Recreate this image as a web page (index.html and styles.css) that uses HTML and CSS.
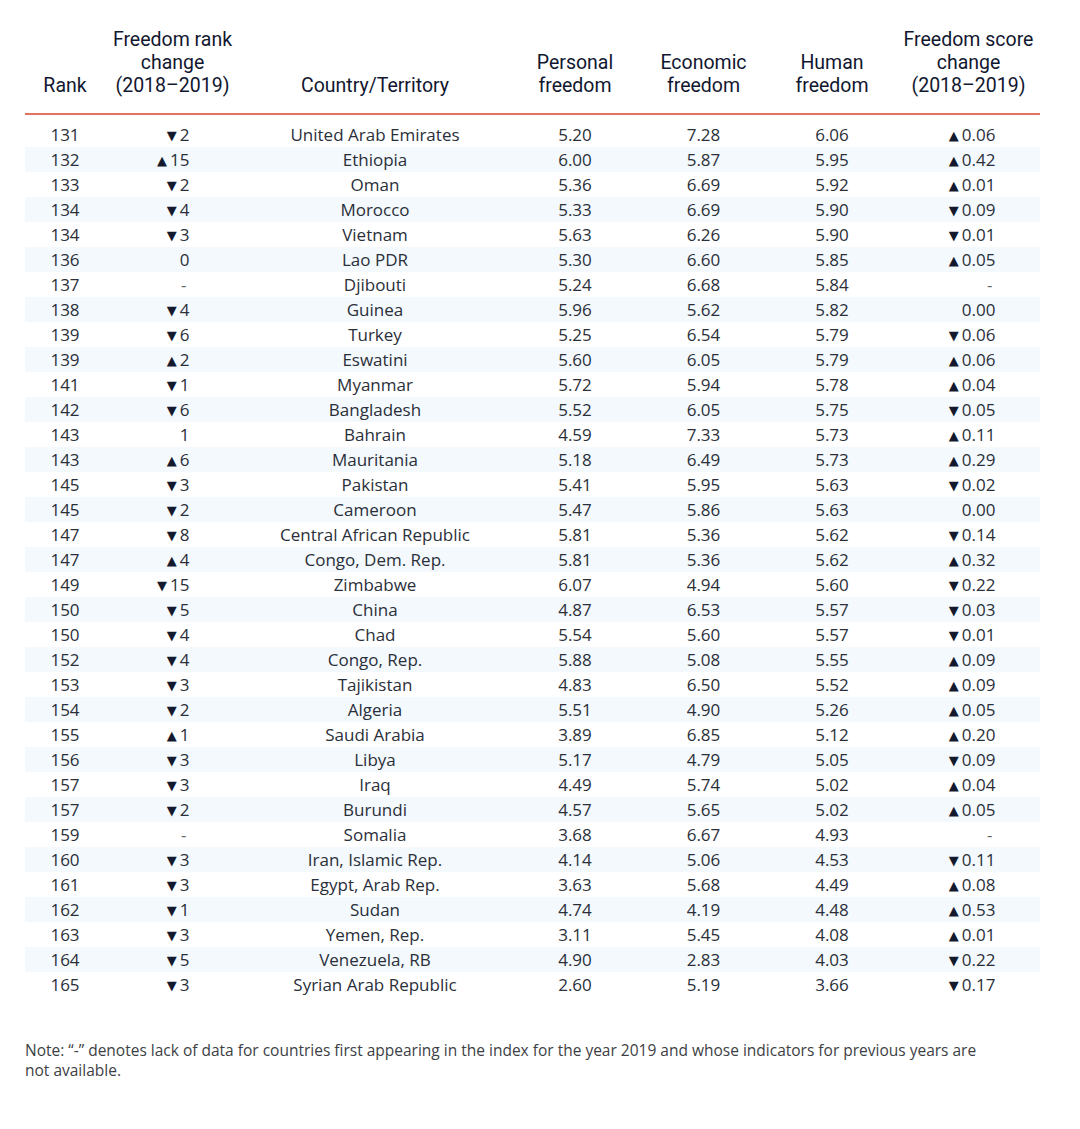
FILE: index.html
```html
<!DOCTYPE html>
<html lang="en">
<head>
    <meta charset="UTF-8">
    <title>Human Freedom Index 131-165</title>
    <link rel="stylesheet" href="styles.css">
</head>
<body>

<table class="rank-table">
    <colgroup>
        <col class="c-rank">
        <col class="c-change">
        <col class="c-country">
        <col class="c-personal">
        <col class="c-economic">
        <col class="c-human">
        <col class="c-score">
    </colgroup>
    <thead>
        <tr>
            <th>Rank</th>
            <th>Freedom rank<br>change<br>(2018–2019)</th>
            <th>Country/Territory</th>
            <th>Personal<br>freedom</th>
            <th>Economic<br>freedom</th>
            <th>Human<br>freedom</th>
            <th>Freedom score<br>change<br>(2018–2019)</th>
        </tr>
    </thead>
    <tbody>
        <tr><td>131</td><td><span class="rc"><i>▼</i>2</span></td><td>United Arab Emirates</td><td>5.20</td><td>7.28</td><td>6.06</td><td><span class="sc"><i>▲</i>0.06</span></td></tr>
        <tr><td>132</td><td><span class="rc"><i>▲</i>15</span></td><td>Ethiopia</td><td>6.00</td><td>5.87</td><td>5.95</td><td><span class="sc"><i>▲</i>0.42</span></td></tr>
        <tr><td>133</td><td><span class="rc"><i>▼</i>2</span></td><td>Oman</td><td>5.36</td><td>6.69</td><td>5.92</td><td><span class="sc"><i>▲</i>0.01</span></td></tr>
        <tr><td>134</td><td><span class="rc"><i>▼</i>4</span></td><td>Morocco</td><td>5.33</td><td>6.69</td><td>5.90</td><td><span class="sc"><i>▼</i>0.09</span></td></tr>
        <tr><td>134</td><td><span class="rc"><i>▼</i>3</span></td><td>Vietnam</td><td>5.63</td><td>6.26</td><td>5.90</td><td><span class="sc"><i>▼</i>0.01</span></td></tr>
        <tr><td>136</td><td><span class="rc">0</span></td><td>Lao PDR</td><td>5.30</td><td>6.60</td><td>5.85</td><td><span class="sc"><i>▲</i>0.05</span></td></tr>
        <tr><td>137</td><td><span class="rc dash">-</span></td><td>Djibouti</td><td>5.24</td><td>6.68</td><td>5.84</td><td><span class="sc dash">-</span></td></tr>
        <tr><td>138</td><td><span class="rc"><i>▼</i>4</span></td><td>Guinea</td><td>5.96</td><td>5.62</td><td>5.82</td><td><span class="sc">0.00</span></td></tr>
        <tr><td>139</td><td><span class="rc"><i>▼</i>6</span></td><td>Turkey</td><td>5.25</td><td>6.54</td><td>5.79</td><td><span class="sc"><i>▼</i>0.06</span></td></tr>
        <tr><td>139</td><td><span class="rc"><i>▲</i>2</span></td><td>Eswatini</td><td>5.60</td><td>6.05</td><td>5.79</td><td><span class="sc"><i>▲</i>0.06</span></td></tr>
        <tr><td>141</td><td><span class="rc"><i>▼</i>1</span></td><td>Myanmar</td><td>5.72</td><td>5.94</td><td>5.78</td><td><span class="sc"><i>▲</i>0.04</span></td></tr>
        <tr><td>142</td><td><span class="rc"><i>▼</i>6</span></td><td>Bangladesh</td><td>5.52</td><td>6.05</td><td>5.75</td><td><span class="sc"><i>▼</i>0.05</span></td></tr>
        <tr><td>143</td><td><span class="rc">1</span></td><td>Bahrain</td><td>4.59</td><td>7.33</td><td>5.73</td><td><span class="sc"><i>▲</i>0.11</span></td></tr>
        <tr><td>143</td><td><span class="rc"><i>▲</i>6</span></td><td>Mauritania</td><td>5.18</td><td>6.49</td><td>5.73</td><td><span class="sc"><i>▲</i>0.29</span></td></tr>
        <tr><td>145</td><td><span class="rc"><i>▼</i>3</span></td><td>Pakistan</td><td>5.41</td><td>5.95</td><td>5.63</td><td><span class="sc"><i>▼</i>0.02</span></td></tr>
        <tr><td>145</td><td><span class="rc"><i>▼</i>2</span></td><td>Cameroon</td><td>5.47</td><td>5.86</td><td>5.63</td><td><span class="sc">0.00</span></td></tr>
        <tr><td>147</td><td><span class="rc"><i>▼</i>8</span></td><td>Central African Republic</td><td>5.81</td><td>5.36</td><td>5.62</td><td><span class="sc"><i>▼</i>0.14</span></td></tr>
        <tr><td>147</td><td><span class="rc"><i>▲</i>4</span></td><td>Congo, Dem. Rep.</td><td>5.81</td><td>5.36</td><td>5.62</td><td><span class="sc"><i>▲</i>0.32</span></td></tr>
        <tr><td>149</td><td><span class="rc"><i>▼</i>15</span></td><td>Zimbabwe</td><td>6.07</td><td>4.94</td><td>5.60</td><td><span class="sc"><i>▼</i>0.22</span></td></tr>
        <tr><td>150</td><td><span class="rc"><i>▼</i>5</span></td><td>China</td><td>4.87</td><td>6.53</td><td>5.57</td><td><span class="sc"><i>▼</i>0.03</span></td></tr>
        <tr><td>150</td><td><span class="rc"><i>▼</i>4</span></td><td>Chad</td><td>5.54</td><td>5.60</td><td>5.57</td><td><span class="sc"><i>▼</i>0.01</span></td></tr>
        <tr><td>152</td><td><span class="rc"><i>▼</i>4</span></td><td>Congo, Rep.</td><td>5.88</td><td>5.08</td><td>5.55</td><td><span class="sc"><i>▲</i>0.09</span></td></tr>
        <tr><td>153</td><td><span class="rc"><i>▼</i>3</span></td><td>Tajikistan</td><td>4.83</td><td>6.50</td><td>5.52</td><td><span class="sc"><i>▲</i>0.09</span></td></tr>
        <tr><td>154</td><td><span class="rc"><i>▼</i>2</span></td><td>Algeria</td><td>5.51</td><td>4.90</td><td>5.26</td><td><span class="sc"><i>▲</i>0.05</span></td></tr>
        <tr><td>155</td><td><span class="rc"><i>▲</i>1</span></td><td>Saudi Arabia</td><td>3.89</td><td>6.85</td><td>5.12</td><td><span class="sc"><i>▲</i>0.20</span></td></tr>
        <tr><td>156</td><td><span class="rc"><i>▼</i>3</span></td><td>Libya</td><td>5.17</td><td>4.79</td><td>5.05</td><td><span class="sc"><i>▼</i>0.09</span></td></tr>
        <tr><td>157</td><td><span class="rc"><i>▼</i>3</span></td><td>Iraq</td><td>4.49</td><td>5.74</td><td>5.02</td><td><span class="sc"><i>▲</i>0.04</span></td></tr>
        <tr><td>157</td><td><span class="rc"><i>▼</i>2</span></td><td>Burundi</td><td>4.57</td><td>5.65</td><td>5.02</td><td><span class="sc"><i>▲</i>0.05</span></td></tr>
        <tr><td>159</td><td><span class="rc dash">-</span></td><td>Somalia</td><td>3.68</td><td>6.67</td><td>4.93</td><td><span class="sc dash">-</span></td></tr>
        <tr><td>160</td><td><span class="rc"><i>▼</i>3</span></td><td>Iran, Islamic Rep.</td><td>4.14</td><td>5.06</td><td>4.53</td><td><span class="sc"><i>▼</i>0.11</span></td></tr>
        <tr><td>161</td><td><span class="rc"><i>▼</i>3</span></td><td>Egypt, Arab Rep.</td><td>3.63</td><td>5.68</td><td>4.49</td><td><span class="sc"><i>▲</i>0.08</span></td></tr>
        <tr><td>162</td><td><span class="rc"><i>▼</i>1</span></td><td>Sudan</td><td>4.74</td><td>4.19</td><td>4.48</td><td><span class="sc"><i>▲</i>0.53</span></td></tr>
        <tr><td>163</td><td><span class="rc"><i>▼</i>3</span></td><td>Yemen, Rep.</td><td>3.11</td><td>5.45</td><td>4.08</td><td><span class="sc"><i>▲</i>0.01</span></td></tr>
        <tr><td>164</td><td><span class="rc"><i>▼</i>5</span></td><td>Venezuela, RB</td><td>4.90</td><td>2.83</td><td>4.03</td><td><span class="sc"><i>▼</i>0.22</span></td></tr>
        <tr><td>165</td><td><span class="rc"><i>▼</i>3</span></td><td>Syrian Arab Republic</td><td>2.60</td><td>5.19</td><td>3.66</td><td><span class="sc"><i>▼</i>0.17</span></td></tr>
    </tbody>
</table>

<p class="note">Note: “-” denotes lack of data for countries first appearing in the index for the year 2019 and whose indicators for previous years are not available.</p>

</body>
</html>
```

FILE: styles.css
```css
body {
    margin: 0;
    padding: 28px 40px 0 25px;
    background: #fff;
    font-family: "Open Sans", Lato, sans-serif;
    color: #2a2f3a;
}

.rank-table {
    width: 1015px;
    border-collapse: separate;
    border-spacing: 0;
    table-layout: fixed;
}

.c-rank { width: 80px; }
.c-change { width: 135px; }
.c-country { width: 270px; }
.c-personal { width: 130px; }
.c-economic { width: 127px; }
.c-human { width: 130px; }
.c-score { width: 143px; }

/* Roboto keeps the tight 23px header lines from colliding */
.rank-table th {
    font-family: Roboto, "Open Sans", sans-serif;
    font-size: 19.5px;
    font-weight: 400;
    line-height: 23px;
    color: #121730;
    text-align: center;
    vertical-align: bottom;
    padding: 0 0 16px;
    border-bottom: 2px solid #e3725f;
}

/* spacer under the header line */
.rank-table tbody tr:first-child td {
    border-top: 7px solid #fff;
}

.rank-table td {
    font-size: 17px;
    height: 25px;
    padding: 0;
    text-align: center;
    vertical-align: middle;
}

.rank-table tbody tr:nth-child(even) td {
    background: #f3f9fc;
}

.rc, .sc {
    display: inline-block;
    text-align: right;
}

.rc {
    width: 34px;
}

.sc {
    width: 54px;
}

.dash {
    padding-right: 6px;
    color: #666;
}

.rc i, .sc i {
    font-style: normal;
    font-family: "DejaVu Sans", sans-serif;
    font-size: 13px;
    color: #141a2e;
    margin-right: 3px;
    vertical-align: 1px;
}

.note {
    margin: 43px 0 0;
    width: 955px;
    font-size: 15.5px;
    line-height: 20px;
    color: #3d3f45;
}
```
